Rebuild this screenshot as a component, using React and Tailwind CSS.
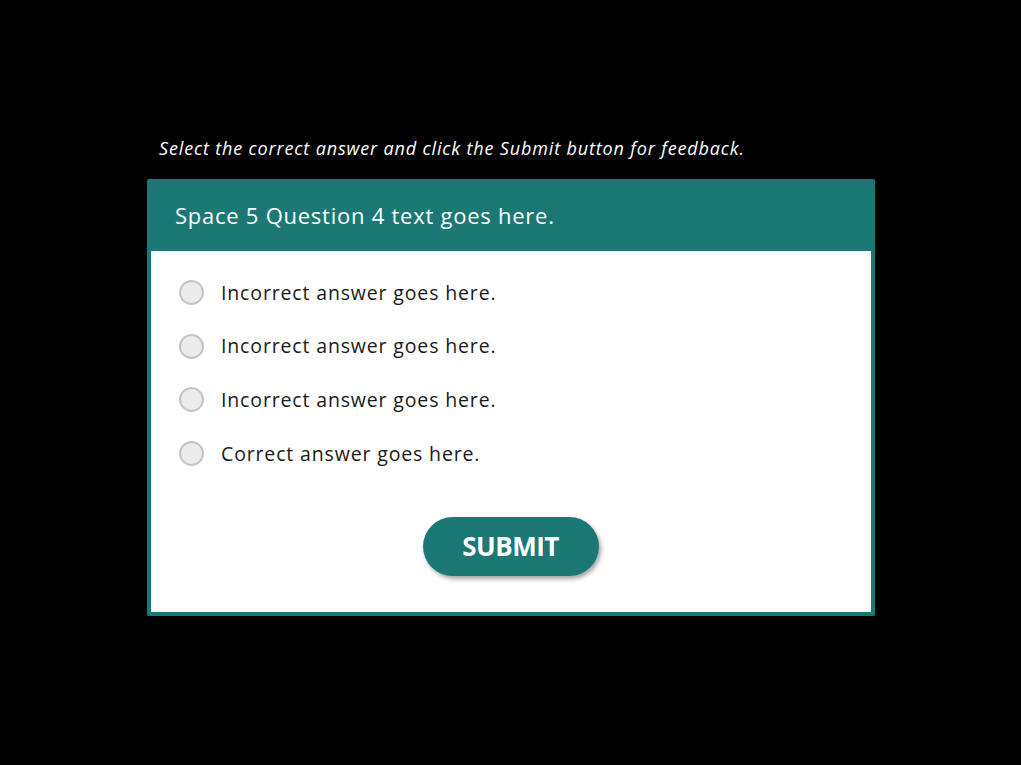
export default function App() {
  const answers = [
    "Incorrect answer goes here.",
    "Incorrect answer goes here.",
    "Incorrect answer goes here.",
    "Correct answer goes here.",
  ];
  return (
    <div
      className="w-[1021px] h-[765px] bg-black pt-[136px] pl-[147px]"
      style={{ fontFamily: '"Open Sans", "Noto Sans", sans-serif' }}
    >
      <p className="ml-[12px] text-[18px] leading-[24px] italic text-white tracking-[0.85px]">
        Select the correct answer and click the Submit button for feedback.
      </p>
      <div className="mt-[19px] w-[728px]">
        <div className="h-[72px] bg-[#1c7874] rounded-t-[2px] flex items-center pl-[28px]">
          <h1 className="text-[22px] leading-none font-medium text-white tracking-[0.75px]">
            Space 5 Question 4 text goes here.
          </h1>
        </div>
        <div className="bg-white border-x-4 border-b-4 border-[#1c7874] rounded-b-[2px] pt-[28px] pb-[36px]">
          <div className="flex flex-col gap-[26.7px] pl-[28px]">
            {answers.map((a, i) => (
              <label key={i} className="flex items-center h-[27px] gap-[17px]">
                <span className="w-[25px] h-[25px] rounded-full bg-[#ebebeb] border-2 border-[#c4c4c4] shrink-0" />
                <span className="text-[19.5px] text-[#1a1a1a] leading-none tracking-[0.85px]">{a}</span>
              </label>
            ))}
          </div>
          <div className="flex justify-center mt-[50px]">
            <button className="w-[176px] h-[59px] rounded-full bg-[#1c7874] text-white text-[26px] font-bold tracking-[-0.5px] shadow-[2px_3px_4px_rgba(0,0,0,0.35)] -ml-[1px]">
              SUBMIT
            </button>
          </div>
        </div>
      </div>
    </div>
  );
}
